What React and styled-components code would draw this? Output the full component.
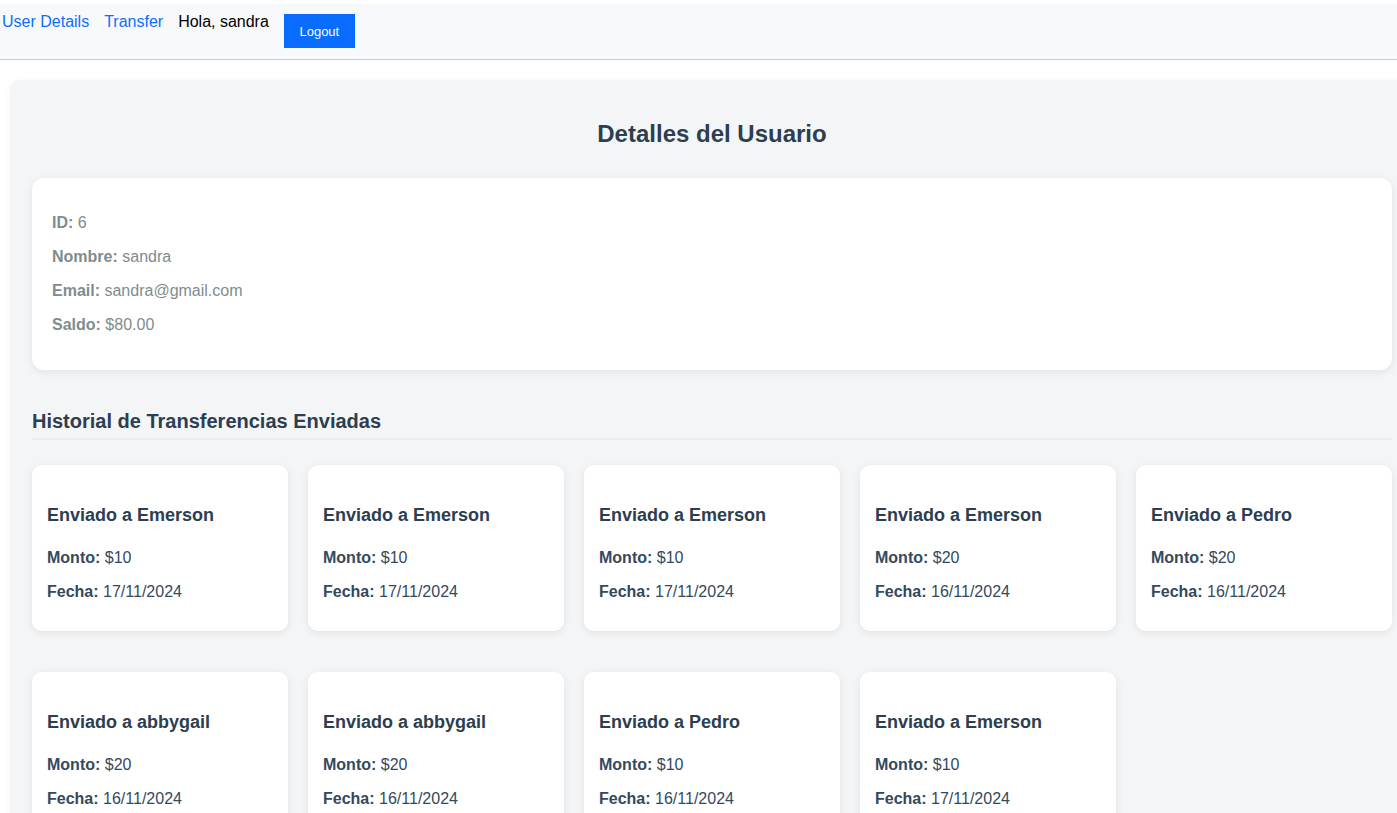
import React from "react";
import styled, { createGlobalStyle } from "styled-components";

const GlobalStyle = createGlobalStyle`
	html, body {
		margin: 0;
		padding: 0;
		background: #ffffff;
		font-family: "Liberation Sans", Arial, Helvetica, sans-serif;
		overflow-x: hidden;
	}
	* {
		box-sizing: border-box;
	}
`;

const user = { id: 6, name: "sandra", email: "sandra@gmail.com", balance: "$80.00" };

const transfers = [
	{ to: "Emerson", amount: "$10", date: "17/11/2024" },
	{ to: "Emerson", amount: "$10", date: "17/11/2024" },
	{ to: "Emerson", amount: "$10", date: "17/11/2024" },
	{ to: "Emerson", amount: "$20", date: "16/11/2024" },
	{ to: "Pedro", amount: "$20", date: "16/11/2024" },
	{ to: "abbygail", amount: "$20", date: "16/11/2024" },
	{ to: "abbygail", amount: "$20", date: "16/11/2024" },
	{ to: "Pedro", amount: "$10", date: "16/11/2024" },
	{ to: "Emerson", amount: "$10", date: "17/11/2024" },
];

function Navbar() {
	return (
		<Nav>
			<NavLink href="#">User Details</NavLink>
			<NavLink href="#">Transfer</NavLink>
			<Greeting>Hola, sandra</Greeting>
			<LogoutButton>Logout</LogoutButton>
		</Nav>
	);
}

function App() {
	return (
		<>
			<GlobalStyle />
			<Navbar />
			<Container>
				<Title>Detalles del Usuario</Title>
				<InfoCard>
					<InfoRow>
						<strong>ID:</strong> {user.id}
					</InfoRow>
					<InfoRow>
						<strong>Nombre:</strong> {user.name}
					</InfoRow>
					<InfoRow>
						<strong>Email:</strong> {user.email}
					</InfoRow>
					<InfoRow>
						<strong>Saldo:</strong> {user.balance}
					</InfoRow>
				</InfoCard>

				<SectionTitle>Historial de Transferencias Enviadas</SectionTitle>
				<TransferGrid>
					{transfers.map((t, i) => (
						<TransferCard key={i}>
							<CardTitle>Enviado a {t.to}</CardTitle>
							<CardRow>
								<strong>Monto:</strong> {t.amount}
							</CardRow>
							<CardRow>
								<strong>Fecha:</strong> {t.date}
							</CardRow>
						</TransferCard>
					))}
				</TransferGrid>
			</Container>
		</>
	);
}

const Nav = styled.nav`
	display: flex;
	align-items: flex-start;
	gap: 15px;
	margin-top: 4px;
	padding: 9px 0 10px 2px;
	height: 56px;
	background: #f8f9fa;
	border-bottom: 1px solid #cccccc;
	font-size: 16px;
	line-height: 18px;
`;

const NavLink = styled.a`
	color: #0d6efd;
	text-decoration: none;
`;

const Greeting = styled.span`
	color: #000000;
`;

const LogoutButton = styled.button`
	margin-top: 1px;
	height: 34px;
	width: 71px;
	padding: 0;
	border: none;
	background: #0a6cff;
	color: #ffffff;
	font-family: inherit;
	font-size: 13px;
	font-weight: 500;
	cursor: pointer;
`;

const Container = styled.main`
	width: 1404px;
	margin: 20px 0 0 10px;
	padding: 20px 22px 40px;
	background: #f4f5f7;
	border-radius: 10px 10px 0 0;
	box-shadow: 0 0 6px rgba(0, 0, 0, 0.04);
`;

const Title = styled.h2`
	margin: 20px 0 30px;
	text-align: center;
	font-size: 24px;
	line-height: 28px;
	color: #2c3e50;
`;

const InfoCard = styled.section`
	background: #ffffff;
	border-radius: 12px;
	padding: 20px;
	box-shadow: 0 2px 8px rgba(0, 0, 0, 0.08);
`;

const InfoRow = styled.p`
	margin: 16px 0;
	font-size: 16px;
	line-height: 18px;
	color: #7f8c8d;
`;

const SectionTitle = styled.h3`
	margin: 40px 0 25px;
	padding-bottom: 5px;
	font-size: 20px;
	line-height: 23px;
	color: #2c3e50;
	border-bottom: 2px solid #e8eef0;
`;

const TransferGrid = styled.div`
	display: grid;
	grid-template-columns: repeat(5, 1fr);
	column-gap: 20px;
	row-gap: 41px;
`;

const TransferCard = styled.div`
	background: #ffffff;
	border-radius: 10px;
	padding: 15px 15px 14px;
	box-shadow: 0 2px 8px rgba(0, 0, 0, 0.08);
`;

const CardTitle = styled.h4`
	margin: 24px 0 23px;
	font-size: 18px;
	line-height: 22px;
	color: #2c3e50;
`;

const CardRow = styled.p`
	margin: 16px 0;
	font-size: 16px;
	line-height: 18px;
	color: #34495e;
`;

export default App;
